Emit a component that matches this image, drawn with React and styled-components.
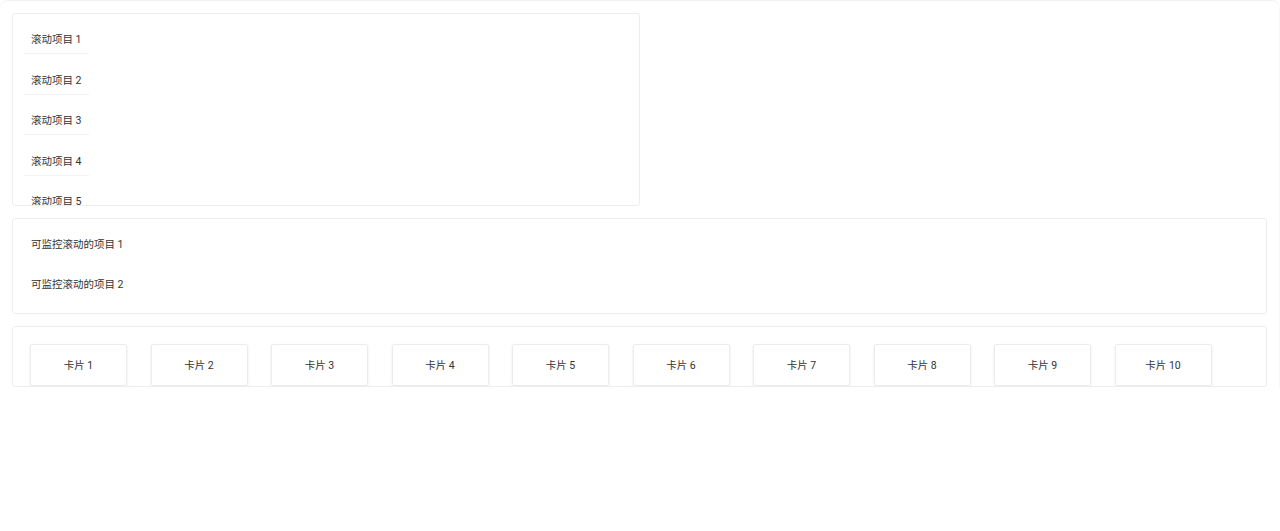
import React from 'react';
import styled, { createGlobalStyle } from 'styled-components';

const GlobalStyle = createGlobalStyle`
  html, body {
    margin: 0;
    padding: 0;
    background: #fff;
  }
  body {
    font-family: Roboto, "Noto Sans CJK SC", sans-serif;
    font-size: 10.5px;
    color: #333;
  }
`;

const Page = styled.div`
  padding: 12px 12px 0 12px;
  border-top: 1px solid #f2f2f2;
  border-right: 1px solid #f7f7f7;
  border-top-right-radius: 8px;
  border-top-left-radius: 8px;
  display: flex;
  flex-direction: column;
  gap: 12px;
`;

const Box = styled.div`
  border: 1px solid #ededed;
  border-radius: 3px;
  box-sizing: border-box;
  background: #fff;
`;

const ScrollBox = styled(Box)`
  width: 50%;
  height: 193px;
  padding: 11px 11px 0;
  overflow: hidden;
  display: flex;
  flex-direction: column;
  align-items: flex-start;
`;

const WatchBox = styled(Box)`
  height: 96px;
  padding: 11px 11px 0;
  overflow: hidden;
  display: flex;
  flex-direction: column;
  align-items: flex-start;
`;

const Item = styled.div`
  padding: 9px 7px 7px;
  line-height: 12px;
  margin-bottom: ${(p) => (p.$lined ? '11.5px' : '11px')};
  border-bottom: 1px solid ${(p) => (p.$lined ? '#f3f3f3' : 'transparent')};
  flex-shrink: 0;
  white-space: nowrap;
`;

const CardRow = styled(Box)`
  height: 61px;
  padding: 17px 17px 0;
  overflow: hidden;
  display: flex;
  gap: 23.5px;
`;

const Card = styled.div`
  flex: 0 0 97px;
  height: 42px;
  box-sizing: border-box;
  border: 1px solid #ececec;
  border-radius: 2px;
  box-shadow: 0 1px 3px rgba(0, 0, 0, 0.08);
  display: flex;
  align-items: center;
  justify-content: center;
  padding-bottom: 1px;
`;

const scrollItems = [1, 2, 3, 4, 5, 6, 7, 8];
const watchItems = [1, 2];
const cards = [1, 2, 3, 4, 5, 6, 7, 8, 9, 10];

const App = () => {
  return (
    <>
      <GlobalStyle />
      <Page>
        <ScrollBox>
          {scrollItems.map((n) => (
            <Item key={n} $lined>
              {`滚动项目 ${n}`}
            </Item>
          ))}
        </ScrollBox>
        <WatchBox>
          {watchItems.map((n) => (
            <Item key={n}>{`可监控滚动的项目 ${n}`}</Item>
          ))}
        </WatchBox>
        <CardRow>
          {cards.map((n) => (
            <Card key={n}>{`卡片 ${n}`}</Card>
          ))}
        </CardRow>
      </Page>
    </>
  );
};

export default App;
